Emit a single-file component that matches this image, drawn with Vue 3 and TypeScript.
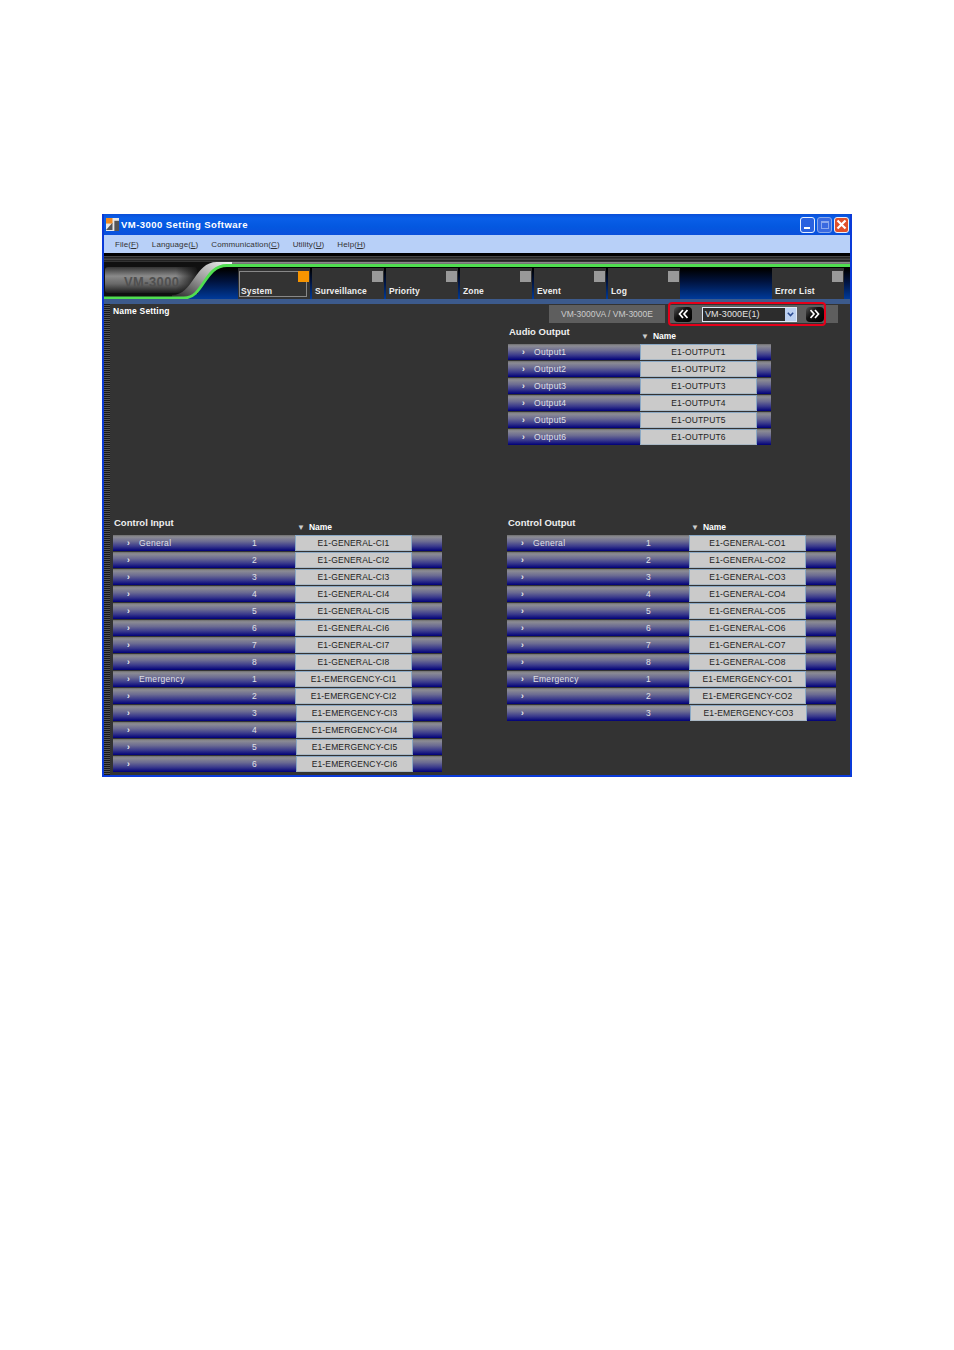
<script setup lang="ts">
interface Row { label: string; num: string; name: string; shift?: boolean }
const menus = [
  { t: 'File(', k: 'F' }, { t: 'Language(', k: 'L' }, { t: 'Communication(', k: 'C' }, { t: 'Utility(', k: 'U' }, { t: 'Help(', k: 'H' },
]
const tabs = ['System', 'Surveillance', 'Priority', 'Zone', 'Event', 'Log']
const audio: Row[] = [1, 2, 3, 4, 5, 6].map((n) => ({ label: `Output${n}`, num: '', name: `E1-OUTPUT${n}` }))
const make = (gen: number, em: number, code: string): Row[] => {
  const rows: Row[] = []
  for (let i = 1; i <= gen; i++) rows.push({ label: i === 1 ? 'General' : '', num: String(i), name: `E1-GENERAL-${code}${i}` })
  for (let i = 1; i <= em; i++) rows.push({ label: i === 1 ? 'Emergency' : '', num: String(i), name: `E1-EMERGENCY-${code}${i}`, shift: i > 2 })
  return rows
}
const controlIn = make(8, 6, 'CI')
const controlOut = make(8, 3, 'CO')
</script>

<template>
  <div class="page">
    <div class="window">
      <div class="title">
        <svg class="app-icon" width="13" height="13" viewBox="0 0 14 14">
          <rect width="14" height="14" fill="#e8e8e8" />
          <rect width="7" height="6" fill="#f08a20" />
          <path d="M0 13 L7 5 L7 13Z" fill="#555" />
          <rect x="9" y="3" width="5" height="11" fill="#555" />
        </svg>
        <span class="title-text">VM-3000 Setting Software</span>
        <span class="win-btns">
          <span class="win-btn min"><i></i></span>
          <span class="win-btn max"><i></i></span>
          <span class="win-btn close">
            <svg width="11" height="11" viewBox="0 0 11 11"><path d="M1.5 1.5 L9.5 9.5 M9.5 1.5 L1.5 9.5" stroke="#fff" stroke-width="2.2" /></svg>
          </span>
        </span>
      </div>
      <div class="menu">
        <span v-for="m in menus" :key="m.k" class="menu-item">{{ m.t }}<u>{{ m.k }}</u>)</span>
      </div>
      <div class="hero">
        <svg class="logo" width="746" height="46" viewBox="0 0 746 46">
          <defs>
            <linearGradient id="lg" x1="0" y1="0" x2="0" y2="1">
              <stop offset="0" stop-color="#333" />
              <stop offset="0.35" stop-color="#8a8a8a" />
              <stop offset="0.65" stop-color="#686868" />
              <stop offset="1" stop-color="#1c1c1c" />
            </linearGradient>
            <linearGradient id="lh" x1="0" y1="0" x2="1" y2="0">
              <stop offset="0" stop-color="#111" stop-opacity="0" />
              <stop offset="1" stop-color="#111" stop-opacity="0.95" />
            </linearGradient>
            <linearGradient id="lw" x1="0" y1="1" x2="1" y2="0">
              <stop offset="0" stop-color="#222" />
              <stop offset="0.5" stop-color="#9a9a9a" />
              <stop offset="1" stop-color="#f4f4f4" />
            </linearGradient>
          </defs>
          <path d="M0 9 H114 V12 C92 14 92 44 72 45 H0Z" fill="#101010" />
          <rect x="1" y="14" width="92" height="26" rx="3" fill="url(#lg)" />
          <rect x="72" y="13" width="22" height="28" fill="url(#lh)" />
          <path d="M68 42 C90 42 90 9 113 9 H128 V12 H123 C100 12 100 45 80 45 H68Z" fill="url(#lw)" />
          <path d="M125 10 H746" stroke="#e8e8e8" stroke-width="1" />
          <path d="M0 45 H80 C100 45 100 12.5 123 12.5 H746" fill="none" stroke="#50de50" stroke-width="2.8" />
          <text transform="translate(20 34) scale(0.92 1)" class="logo-text">VM-3000</text>
        </svg>
        <div class="tabs">
          <div v-for="(t, i) in tabs" :key="t" class="tab" :class="{ active: i === 0 }">
            <i class="mark"></i><span>{{ t }}</span>
          </div>
          <div class="tab-gap"></div>
          <div class="tab"><i class="mark"></i><span>Error List</span></div>
        </div>
      </div>
      <div class="stripe"></div>
      <div class="content">
        <div class="grip"></div>
        <div class="main">
          <div class="topbar">
            <span class="page-title">Name Setting</span>
            <span class="model">VM-3000VA / VM-3000E</span>
            <div class="selector">
              <span class="nav-btn">
                <svg width="10" height="10" viewBox="0 0 10 10"><path d="M5 1 L1.5 5 L5 9 M9.5 1 L6 5 L9.5 9" fill="none" stroke="#fff" stroke-width="1.7" /></svg>
              </span>
              <span class="combo">
                <span class="combo-text">VM-3000E(1)</span>
                <span class="combo-arrow">
                  <svg width="7" height="5" viewBox="0 0 7 5"><path d="M.8 .8 L3.5 3.6 L6.2 .8" fill="none" stroke="#2a4a90" stroke-width="1.5" /></svg>
                </span>
              </span>
              <span class="nav-btn">
                <svg width="10" height="10" viewBox="0 0 10 10"><path d="M.5 1 L4 5 L.5 9 M5 1 L8.5 5 L5 9" fill="none" stroke="#fff" stroke-width="1.7" /></svg>
              </span>
            </div>
            <span class="tail"></span>
          </div>
          <div class="sections">
            <section class="sec audio">
              <div class="sec-head"><h3>Audio Output</h3><span class="col-name"><i>▼</i>Name</span></div>
              <div v-for="r in audio" :key="r.name" class="row">
                <span class="arrow">›</span><span class="label">{{ r.label }}</span>
                <span class="cell">{{ r.name }}</span>
              </div>
            </section>
            <section class="sec control">
              <div class="sec-head"><h3>Control Input</h3><span class="col-name"><i>▼</i>Name</span></div>
              <div v-for="r in controlIn" :key="r.name" class="row">
                <span class="arrow">›</span><span class="label">{{ r.label }}</span><span class="num">{{ r.num }}</span>
                <span class="cell" :class="{ shift: r.shift }">{{ r.name }}</span>
              </div>
            </section>
            <section class="sec control out">
              <div class="sec-head"><h3>Control Output</h3><span class="col-name"><i>▼</i>Name</span></div>
              <div v-for="r in controlOut" :key="r.name" class="row">
                <span class="arrow">›</span><span class="label">{{ r.label }}</span><span class="num">{{ r.num }}</span>
                <span class="cell" :class="{ shift: r.shift }">{{ r.name }}</span>
              </div>
            </section>
          </div>
        </div>
      </div>
    </div>
  </div>
</template>

<style>
html, body { background: #fff; }
</style>

<style scoped>
.page { width: 954px; height: 1350px; padding: 214px 0 0 102px; box-sizing: border-box; font-family: "Liberation Sans", Arial, sans-serif; }
.window { width: 750px; height: 563px; box-sizing: border-box; border: 2px solid #0a3ad8; border-top: 0; display: flex; flex-direction: column; overflow: hidden; }
.title { height: 21px; flex: none; padding: 0 1px 0 2px; display: flex; align-items: center; background: linear-gradient(#0a4fd8 0, #0a5fe8 20%, #0458e0 60%, #0a50dc 100%); }
.app-icon { margin-right: 2px; }
.title-text { color: #fff; font-size: 9.5px; font-weight: bold; letter-spacing: 0.45px; }
.win-btns { margin-left: auto; display: flex; gap: 2px; }
.win-btn { width: 13px; height: 14px; border: 1px solid #e8f0ff; border-radius: 3px; background: #2a62e0; display: flex; align-items: center; justify-content: center; position: relative; }
.win-btn.min i { width: 6px; height: 2px; background: #fff; position: absolute; left: 3px; bottom: 3px; }
.win-btn.max { background: #3a6ae0; border-color: #8aa8e8; }
.win-btn.max i { width: 8px; height: 8px; border: 1px solid #8aa8ee; border-top-width: 2px; box-sizing: border-box; }
.win-btn.close { background: #e0502a; }
.menu { height: 18px; flex: none; display: flex; align-items: center; padding-left: 11px; gap: 13px; background: #b8d0f8; color: #333; font-size: 8px; letter-spacing: 0.1px; }
.hero { height: 46px; flex: none; position: relative; background: linear-gradient(#000 0, #000 3px, #555 3px, #111 5px, #555 6px, #111 8px, #555 9px, #000 10px, #000 16px, #00123c 28px, #003a9a 46px); }
.logo { position: absolute; left: 0; top: 0; z-index: 0; }
.logo-text { font: bold 14px "Liberation Sans", Arial, sans-serif; letter-spacing: 0.5px; fill: #505050; }
.tabs { position: relative; z-index: 1; height: 31px; margin: 15px 0 0 134px; display: flex; gap: 2px; width: 606px; }
.tab { width: 72px; height: 31px; flex: none; position: relative; background: #333; box-sizing: border-box; display: flex; align-items: flex-end; padding: 0 0 3px 3px; color: #eee; font-size: 8.5px; font-weight: bold; letter-spacing: 0.15px; }
.tab.active::before { content: ""; position: absolute; left: 1px; right: 3px; top: 3px; bottom: 2px; border: 1px solid #888; }
.tab span { position: relative; }
.tab .mark { position: absolute; right: 1px; top: 3px; width: 11px; height: 11px; background: #999; z-index: 1; }
.tab.active .mark { background: #f79400; }
.tab-gap { flex: 1; }
.stripe { height: 5px; flex: none; background: #3c5a8c; }
.content { flex: 1; display: flex; background: #333; min-height: 0; }
.grip { width: 6px; flex: none; background: repeating-linear-gradient(#1a1a1a 0, #1a1a1a 1px, #555 1px, #555 2px); }
.main { flex: 1; padding: 0 12px 0 3px; display: flex; flex-direction: column; min-width: 0; }
.topbar { height: 22px; margin-top: -1px; flex: none; display: flex; align-items: center; position: relative; }
.page-title { color: #fff; font-size: 8.5px; font-weight: bold; letter-spacing: 0.2px; margin-right: auto; align-self: flex-start; margin-top: 3px; }
.model { width: 116px; height: 18px; margin-right: 3px; background: #5e5e5e; color: #ccc; font-size: 8.5px; display: flex; align-items: center; justify-content: center; }
.selector { width: 158px; height: 24px; box-sizing: border-box; border: 2px solid #e4001a; border-radius: 4px; background: linear-gradient(#333 0, #333 1px, #5e5e5e 1px, #5e5e5e 19px, #333 19px); display: flex; align-items: center; padding-left: 4px; }
.nav-btn { width: 18px; height: 15px; background: linear-gradient(135deg, #555 0, #111 40%, #000 100%); border-radius: 4px; display: flex; align-items: center; justify-content: center; flex: none; }
.combo { width: 95px; height: 15px; margin: 0 9px 0 10px; flex: none; box-sizing: border-box; border: 1px solid #dfe8f4; background: #2c2c2c; display: flex; align-items: center; }
.combo-text { flex: 1; color: #e4e4e4; font-size: 9px; padding-left: 2px; letter-spacing: 0.1px; }
.combo-arrow { width: 11px; height: 13px; background: #bcd0f0; display: flex; align-items: center; justify-content: center; }
.tail { width: 12px; height: 18px; background: #5e5e5e; }
.sections { display: grid; grid-template-columns: 394px 1fr; grid-template-rows: 121px auto; row-gap: 70px; }
.sec.audio { grid-column: 2; grid-row: 1; margin-left: 1px; width: 263px; }
.sec.control { grid-row: 2; grid-column: 1; width: 329px; }
.sec.control.out { grid-column: 2; }
.sec-head { height: 19px; position: relative; }
h3 { margin: 0; position: absolute; left: 1px; top: 1px; color: #eee; font-size: 9.5px; font-weight: bold; }
.col-name { position: absolute; top: 6px; color: #fff; font-size: 8.5px; font-weight: bold; display: flex; align-items: center; }
.col-name i { font-size: 8px; font-style: normal; color: #ccc; margin-right: 4px; font-weight: normal; }
.control .col-name { left: 184px; }
.audio .col-name { left: 133px; }
.row { height: 16px; margin-bottom: 1px; display: flex; align-items: stretch; background: linear-gradient(#6e6e6e 0, #8c8c94 12%, #6c6c92 40%, #3a3a8c 70%, #000078 100%); color: #e0e0e6; font-size: 8.5px; line-height: 16px; letter-spacing: 0.3px; }
.arrow { width: 26px; flex: none; padding-left: 14px; box-sizing: border-box; color: #eee; font-weight: bold; }
.label { flex: none; }
.control .label { width: 113px; }
.audio .label { width: 106px; }
.num { width: 43px; flex: none; }
.cell { width: 117px; flex: none; box-sizing: border-box; background: #cacaca; border: 1px solid #8aa8c4; border-bottom-color: #aab8c4; color: #222; text-align: center; line-height: 14px; letter-spacing: 0.15px; }
.cell.shift { margin-left: 1px; }
</style>
